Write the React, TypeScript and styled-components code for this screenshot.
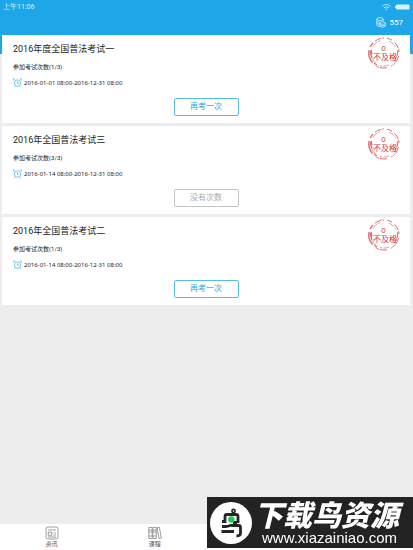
import React from 'react';
import styled, { createGlobalStyle } from 'styled-components';

const blue = '#1da7e8';

const GlobalStyle = createGlobalStyle`
  * { box-sizing: border-box; }
  body {
    margin: 0;
    background: #ededed;
    color: #222;
    font-family: Roboto, "Noto Sans CJK SC", sans-serif;
  }
  h2, p { margin: 0; font-weight: 400; }
`;

const Page = styled.div`
  min-height: 100vh;
  display: flex;
  flex-direction: column;
`;

const Header = styled.header`
  height: 54px;
  background: ${blue};
  color: #fff;
`;

const StatusBar = styled.div`
  height: 14px;
  padding: 0 3px;
  display: flex;
  align-items: center;
  justify-content: space-between;
  font-size: 7px;
  line-height: 14px;
  color: #d9f1fc;
`;

const StatusIcons = styled.div`
  display: flex;
  align-items: center;
  gap: 4px;
`;

const Points = styled.div`
  display: flex;
  align-items: center;
  justify-content: flex-end;
  gap: 4px;
  height: 16px;
  padding-right: 10px;
  font-size: 8px;
`;

const ExamList = styled.main`
  flex: 1;
  display: flex;
  flex-direction: column;
  gap: 3px;
  margin: -19px 3px 0 2px;
`;

const Card = styled.article`
  position: relative;
  display: flex;
  flex-direction: column;
  padding: 8px 11px 7px;
  background: #fff;
`;

const Title = styled.h2`
  font-size: 9px;
  line-height: 12px;
`;

const Attempts = styled.p`
  && { margin-top: 7px; }
  font-size: 6px;
  line-height: 10px;
`;

const Period = styled.p`
  && { margin-top: 6px; }
  display: flex;
  align-items: center;
  gap: 2px;
  font-family: "Noto Sans", "Noto Sans CJK SC", sans-serif;
  font-size: 6px;
  line-height: 10px;
`;

const ExamButton = styled.button`
  align-self: center;
  width: 65px;
  height: 18px;
  margin-top: 10px;
  padding: 0;
  border: 1px solid ${(p) => (p.disabled ? '#c4c4c4' : '#58bcea')};
  border-radius: 2px;
  background: #fff;
  color: ${(p) => (p.disabled ? '#aaa' : blue)};
  font: inherit;
  font-size: 8px;
  line-height: 16px;
`;

const Stamp = styled.svg`
  position: absolute;
  top: 1px;
  right: 9px;
  width: 34px;
  height: 34px;
  overflow: visible;
`;

const TabBar = styled.nav`
  display: grid;
  grid-template-columns: repeat(4, 1fr);
  height: 26px;
  background: #fff;
`;

const Tab = styled.a`
  display: flex;
  flex-direction: column;
  align-items: center;
  padding-top: 2px;
  color: #555;
  font-size: 6px;
  line-height: 8px;
  text-decoration: none;
`;

const Watermark = styled.aside`
  position: fixed;
  right: 0;
  bottom: 2px;
  display: flex;
  align-items: center;
  gap: 2px;
  width: 206px;
  height: 51px;
  padding-left: 3px;
  background: #232323;
  color: #fff;
`;

const Brand = styled.div`
  display: flex;
  flex-direction: column;
  white-space: nowrap;
`;

const BrandName = styled.strong`
  font-family: "Noto Sans CJK SC", sans-serif;
  font-size: 29px;
  font-weight: 900;
  font-style: italic;
  line-height: 31px;
`;

const BrandUrl = styled.span`
  padding-left: 8px;
  font-family: "Liberation Sans", sans-serif;
  font-size: 15px;
  line-height: 18px;
`;

const ClockIcon = () => (
  <svg width="9" height="10" viewBox="0 0 9 10" fill="none" stroke="#55bce9" strokeWidth=".8" aria-hidden="true">
    <circle cx="4.5" cy="5" r="3.2" />
    <path d="M.6 2.4V.9h1.6M6.8.9h1.6v1.5M4.5 3.2v2h1.7M2.3 7.8l-.9 1.3M6.7 7.8l.9 1.3" />
  </svg>
);

const WifiIcon = () => (
  <svg width="9" height="8" viewBox="0 0 9 8" fill="none" stroke="#bfe7fa" aria-hidden="true">
    <path d="M.5 3.2q4-3.4 8 0M2 4.8q2.5-2 5 0" />
    <path d="M3.2 5.7h2.6L4.5 7.2z" fill="#bfe7fa" stroke="none" />
  </svg>
);

const BatteryIcon = () => (
  <svg width="15" height="6" viewBox="0 0 15 6" aria-hidden="true">
    <rect x="1" y=".5" width="13.5" height="5" rx="1" fill="#d8f2fd" />
    <path d="M0 2h1v2H0z" fill="#d8f2fd" />
  </svg>
);

const CoinsIcon = () => (
  <svg width="10" height="11" viewBox="0 0 10 11" fill="none" stroke="#d5f0fc" strokeWidth=".8" aria-hidden="true">
    <ellipse cx="4" cy="2" rx="3.2" ry="1.4" />
    <path d="M.8 2v6.2q.8 1.3 3.2 1.3M7.2 2v2.3M.8 4q.9 1.4 3.6 1.4M.8 6q.8 1.3 3 1.3" />
    <ellipse cx="6.6" cy="6" rx="2.7" ry="1.3" />
    <path d="M3.9 6v3q.5 1.3 2.7 1.3T9.3 9V6M3.9 7.6q.5 1.2 2.7 1.2t2.7-1.2" />
  </svg>
);

const FailStamp = () => (
  <Stamp viewBox="0 0 34 34" role="img" aria-label="0 不及格">
    <g fill="none" stroke="#dc7277">
      <path d="M8 5.2A15 15 0 0 1 17 2M20 2.2a15 15 0 0 1 5 2M27.5 6.3A15 15 0 0 1 32 16M31.500 20A15 15 0 0 1 24 30.300M20 31.700A15 15 0 0 1 8.500 29.500" strokeDasharray="7 1 3 .6" />
      <path d="M5.500 26.500A15 15 0 0 1 2 14M3.200 11A15 15 0 0 1 6 7" strokeWidth="1.4" />
      <path d="M8.500 27A13 13 0 0 1 4.500 14M6 10.500A13 13 0 0 1 13 4.700M22 5.200A13 13 0 0 1 28.500 11M29.500 20A13 13 0 0 1 26 26.500M22 29A13 13 0 0 1 13 29.500" strokeWidth=".7" strokeDasharray="6 1 3 1" />
      <path d="M3 15l2 7M4 14l1 4M7 27l3 2M31 14l-1 6" strokeWidth="1.2" />
    </g>
    <g fill="#d2343c" textAnchor="middle" fontFamily='"Liberation Sans", "Noto Sans CJK SC", sans-serif'>
      <text x="16.5" y="15" fontSize="8">0</text>
      <text x="18" y="24" fontSize="8">不及格</text>
    </g>
  </Stamp>
);

const NewsIcon = () => (
  <svg width="14" height="14" viewBox="0 0 14 14" fill="none" stroke="#888" strokeWidth=".8" aria-hidden="true">
    <rect x="1" y="1" width="12" height="12" rx="2" />
    <path d="M3 4h8M8.5 7H11M8.5 9H11M3 11h8" />
    <rect x="3.2" y="6.2" width="3.6" height="3" />
  </svg>
);

const BooksIcon = () => (
  <svg width="14" height="14" viewBox="0 0 14 14" fill="none" stroke="#888" strokeWidth=".8" aria-hidden="true">
    <path d="M.8 1.5h3.400v11H.8zM4.900 1.500h3.400v11H4.900zM9 1.800l2.400-.5 2 10.800-2.400.5zM.8 4h3.400M.8 6h3.400M.8 10h3.400M4.900 4h3.400M4.900 6h3.400M4.900 10h3.400" />
  </svg>
);

const BirdLogo = () => (
  <svg width="42" height="42" viewBox="0 0 42 42" aria-hidden="true">
    <circle cx="21" cy="21" r="21" fill="#fff" />
    <g fill="none" stroke="#252525" strokeWidth="2.8" strokeLinejoin="round">
      <circle cx="23.5" cy="9" r="1.6" strokeWidth="1.6" />
      <path d="M15 21v-6.500q0-2 2-2h9q2 0 2 2V21M12 19.500h3M27 20.500h-4" />
      <path d="M12 24.500h4q2 0 3-.6t3-.4h6.500q2 0 2 2V31q0 3-4 3M11.500 29.500H24" />
    </g>
    <circle cx="21.3" cy="17.5" r="3.2" fill="#20c763" />
  </svg>
);

const exams = [
  { title: '2016年度全国普法考试一', used: 1, total: 3, period: '2016-01-01 08:00-2016-12-31 08:00' },
  { title: '2016年全国普法考试三', used: 3, total: 3, period: '2016-01-14 08:00-2016-12-31 08:00' },
  { title: '2016年全国普法考试二', used: 1, total: 3, period: '2016-01-14 08:00-2016-12-31 08:00' },
];

export default function App() {
  return (
    <>
      <GlobalStyle />
      <Page>
        <Header>
          <StatusBar>
            <span>上午11:06</span>
            <StatusIcons><WifiIcon /><BatteryIcon /></StatusIcons>
          </StatusBar>
          <Points><CoinsIcon />557</Points>
        </Header>
        <ExamList>
          {exams.map((exam) => (
            <Card key={exam.title}>
              <Title>{exam.title}</Title>
              <Attempts>{`参加考试次数(${exam.used}/${exam.total})`}</Attempts>
              <Period><ClockIcon />{exam.period}</Period>
              <ExamButton type="button" disabled={exam.used >= exam.total}>
                {exam.used >= exam.total ? '没有次数' : '再考一次'}
              </ExamButton>
              <FailStamp />
            </Card>
          ))}
        </ExamList>
        <TabBar>
          <Tab href="#news"><NewsIcon />资讯</Tab>
          <Tab href="#courses"><BooksIcon />课程</Tab>
        </TabBar>
      </Page>
      <Watermark>
        <BirdLogo />
        <Brand>
          <BrandName>下载鸟资源</BrandName>
          <BrandUrl>www.xiazainiao.com</BrandUrl>
        </Brand>
      </Watermark>
    </>
  );
}
